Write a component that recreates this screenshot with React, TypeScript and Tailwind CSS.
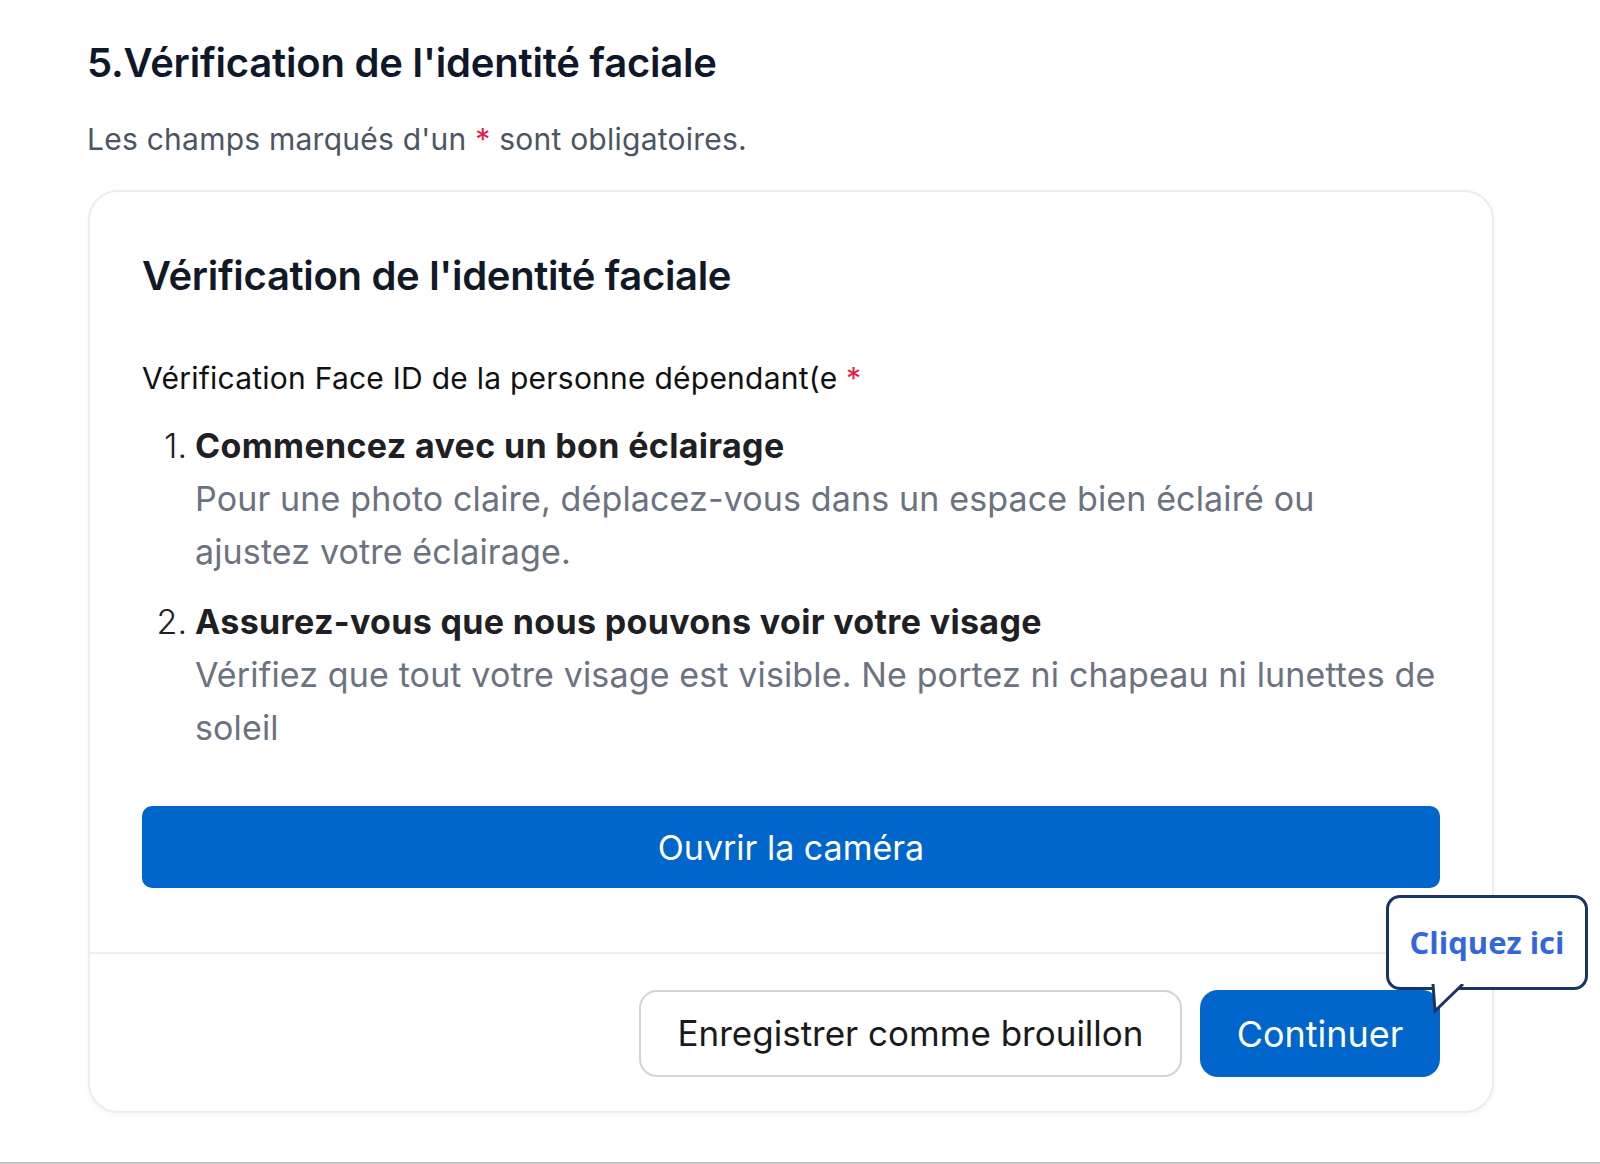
export default function App() {
  return (
    <div
      className="relative h-[1164px] w-[1600px] overflow-hidden border-b-2 border-[#c4c4c4] bg-white"
      style={{ fontFamily: 'Inter, "Noto Sans", sans-serif' }}
    >
      <div className="pl-[87px] pt-[37px]">
        {/* Section header */}
        <h1 className="text-[40px] font-semibold leading-[52px] tracking-[-0.005em] text-[#0f172a]">
          5.Vérification de l'identité faciale
        </h1>
        <p className="mt-[31px] text-[30px] leading-[38px] tracking-[0.008em] text-[#4b5563]">
          Les champs marqués d'un <span className="text-[#e11d48]">*</span> sont obligatoires.
        </p>
      </div>

      {/* Card */}
      <div className="ml-[88px] mt-[32px] w-[1406px] rounded-[30px] border-2 border-[#ededed] bg-white shadow-[0_2px_6px_rgba(0,0,0,0.04)]">
        <div className="px-[52px] pt-[60px] pb-[64px]">
          <h2 className="text-[40px] font-semibold leading-[48px] tracking-[-0.008em] text-[#111827]">
            Vérification de l'identité faciale
          </h2>

          <p className="mt-[58px] text-[30px] leading-[40px] tracking-[0.008em] text-[#111]">
            Vérification Face ID de la personne dépendant(e <span className="text-[#e11d48]">*</span>
          </p>

          <ol className="mt-[21px] flex flex-col gap-[17px]">
            <li className="flex">
              <span className="w-[53px] shrink-0 pr-[8px] text-right text-[34px] font-light leading-[53px] text-[#1f2023]">1.</span>
              <div>
                <div className="text-[34px] font-bold leading-[53px] tracking-[0.01em] text-[#1f2023]">
                  Commencez avec un bon éclairage
                </div>
                <div className="whitespace-nowrap text-[34px] leading-[53px] tracking-[0.004em] text-[#6b7280]">
                  Pour une photo claire, déplacez-vous dans un espace bien éclairé ou
                  <br />
                  ajustez votre éclairage.
                </div>
              </div>
            </li>
            <li className="flex">
              <span className="w-[53px] shrink-0 pr-[8px] text-right text-[34px] font-light leading-[53px] text-[#1f2023]">2.</span>
              <div>
                <div className="text-[34px] font-bold leading-[53px] tracking-[0.01em] text-[#1f2023]">
                  Assurez-vous que nous pouvons voir votre visage
                </div>
                <div className="whitespace-nowrap text-[34px] leading-[53px] tracking-[0.004em] text-[#6b7280]">
                  Vérifiez que tout votre visage est visible. Ne portez ni chapeau ni lunettes de
                  <br />
                  soleil
                </div>
              </div>
            </li>
          </ol>

          <button className="mt-[52px] flex h-[82px] w-full items-center justify-center rounded-[10px] bg-[#0066cc] text-[34px] text-white">
            Ouvrir la caméra
          </button>
        </div>

        {/* Footer */}
        <div className="flex justify-end gap-[18px] border-t-2 border-[#efefef] px-[52px] pt-[36px] pb-[34px]">
          <button className="h-[87px] w-[543px] rounded-[18px] border-2 border-[#d4d4d8] bg-white text-[35px] text-[#1a1a1a]">
            Enregistrer comme brouillon
          </button>
          <div className="relative">
            <button className="h-[87px] w-[240px] rounded-[18px] bg-[#0066cc] text-[36px] text-white">
              Continuer
            </button>
            {/* Tooltip bubble */}
            <div className="absolute left-[186px] top-[-95px] flex h-[95px] w-[202px] items-center justify-center rounded-[14px] border-[3px] border-[#1b3466] bg-white">
              <span
                className="text-[31px] font-bold text-[#3366dd]"
                style={{ fontFamily: '"Open Sans", "Noto Sans", sans-serif' }}
              >
                Cliquez ici
              </span>
              <svg
                className="absolute left-[40px] top-[calc(100%-3px)]"
                width="36"
                height="30"
                viewBox="0 0 36 30"
              >
                <path d="M4 0 L6 27 L34 0" fill="white" stroke="#1b3466" strokeWidth="3" strokeLinejoin="miter" />
              </svg>
            </div>
          </div>
        </div>
      </div>
    </div>
  );
}
